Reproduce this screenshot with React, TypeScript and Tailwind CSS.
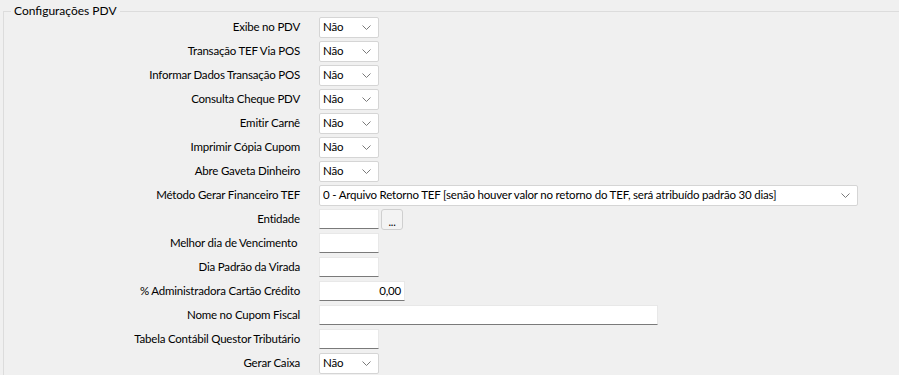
import React from "react";

type Row = {
  label: string;
  kind: "select" | "wide" | "input" | "entity" | "money" | "long";
  value?: string;
};

const ROWS: Row[] = [
  { label: "Exibe no PDV", kind: "select", value: "Não" },
  { label: "Transação TEF Via POS", kind: "select", value: "Não" },
  { label: "Informar Dados Transação POS", kind: "select", value: "Não" },
  { label: "Consulta Cheque PDV", kind: "select", value: "Não" },
  { label: "Emitir Carnê", kind: "select", value: "Não" },
  { label: "Imprimir Cópia Cupom", kind: "select", value: "Não" },
  { label: "Abre Gaveta Dinheiro", kind: "select", value: "Não" },
  {
    label: "Método Gerar Financeiro TEF",
    kind: "wide",
    value: "0 - Arquivo Retorno TEF [senão houver valor no retorno do TEF, será atribuído padrão 30 dias]",
  },
  { label: "Entidade", kind: "entity" },
  { label: "Melhor dia de Vencimento ", kind: "input" },
  { label: "Dia Padrão da Virada", kind: "input" },
  { label: "% Administradora Cartão Crédito", kind: "money", value: "0,00" },
  { label: "Nome no Cupom Fiscal", kind: "long" },
  { label: "Tabela Contábil Questor Tributário", kind: "input" },
  { label: "Gerar Caixa", kind: "select", value: "Não" },
];

function Chevron() {
  return (
    <svg width="9" height="5" viewBox="0 0 9 5" className="shrink-0">
      <polyline points="0.5,0.5 4.5,4.5 8.5,0.5" fill="none" stroke="#7a7a7a" strokeWidth="1" />
    </svg>
  );
}

function Combo({ value, wide }: { value?: string; wide?: boolean }) {
  return (
    <div
      className={`flex items-center h-[21px] bg-white border border-[#d5d5d5] rounded-[2px] pl-[3px] pr-[7px] ${
        wide ? "w-[539px]" : "w-[60px]"
      }`}
    >
      <span className="flex-1 whitespace-nowrap overflow-hidden">{value}</span>
      <Chevron />
    </div>
  );
}

function TextBox({ width, value, right }: { width: string; value?: string; right?: boolean }) {
  return (
    <div
      className={`h-[20px] bg-white border border-[#e8e8e8] border-b-[#7a7a7a] px-[3px] flex items-center ${width} ${
        right ? "justify-end" : ""
      }`}
    >
      {value}
    </div>
  );
}

function Control({ row }: { row: Row }) {
  switch (row.kind) {
    case "select":
      return <Combo value={row.value} />;
    case "wide":
      return <Combo value={row.value} wide />;
    case "entity":
      return (
        <div className="flex items-center gap-[2px]">
          <TextBox width="w-[60px]" />
          <button className="w-[22px] h-[21px] rounded-[3px] border border-[#cfcfcf] bg-[#f3f3f3] text-[11px] leading-none pt-[5px]">
            ...
          </button>
        </div>
      );
    case "money":
      return <TextBox width="w-[86px]" value={row.value} right />;
    case "long":
      return <TextBox width="w-[339px]" />;
    default:
      return <TextBox width="w-[60px]" />;
  }
}

export default function App() {
  return (
    <div className="w-[899px] h-[375px] overflow-hidden bg-[#f0f0f0] text-[11.5px] tracking-[-0.2px] text-black font-['Lato','Liberation_Sans',sans-serif]">
      <fieldset className="ml-[3px] mt-[4px] w-[920px] h-[420px] border border-[#dcdcdc]">
        <legend className="ml-[7px] px-[3px] leading-[14px] text-[12px] tracking-normal">Configurações PDV</legend>
        <div className="-mt-[3px] flex flex-col">
          {ROWS.map((row) => (
            <div key={row.label} className="flex items-center h-[24px]">
              <div className="w-[296px] text-right whitespace-pre">{row.label}</div>
              <div className="ml-[19px]">
                <Control row={row} />
              </div>
            </div>
          ))}
        </div>
      </fieldset>
    </div>
  );
}
